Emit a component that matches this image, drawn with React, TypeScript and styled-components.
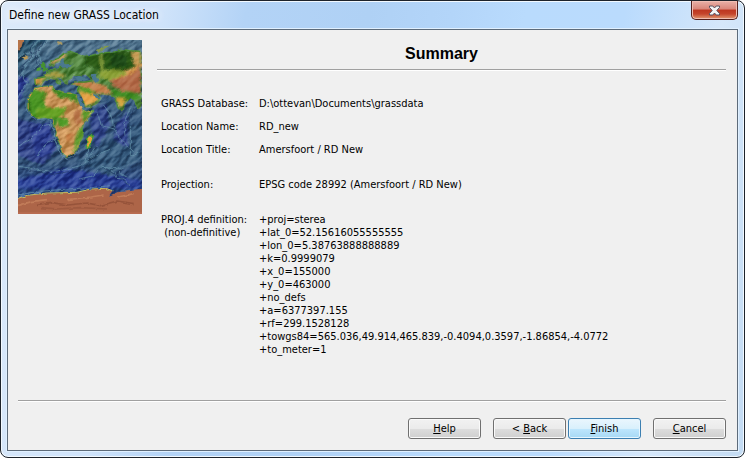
import React from "react";
import styled, { createGlobalStyle, css } from "styled-components";

const GlobalStyle = createGlobalStyle`
  *, *::before, *::after { box-sizing: border-box; }
  html, body { margin: 0; background: #fff; }
  body { font-family: "DejaVu Sans Condensed", "Noto Sans", sans-serif; font-size: 11px; line-height: 13px; color: #000; }
`;

const Frame = styled.div`
  display: flex;
  flex-direction: column;
  min-height: 100vh;
  padding: 0 6px 6px;
  border: 1px solid #1d232b;
  border-radius: 8px;
  background: linear-gradient(100deg, #dceafa 0%, #cfe3fa 20%, #b3d3f6 30%, #afd1f5 45%, #b3d5f9 55%, #b9dbfd 64%, #badbfd 76%, #d5e7fa 88%, #c3dbf3 100%);
  box-shadow: inset 0 0 0 1px #f2f9ff;
`;

const TitleBar = styled.header`
  display: flex;
  justify-content: space-between;
  align-items: flex-start;
  height: 28px;
`;

const WindowTitle = styled.h1`
  margin: 0;
  padding: 5px 8px 0 2px;
  font-size: 12px;
  font-weight: 400;
  line-height: 18px;
  text-shadow: 0 0 8px #fff, 0 0 8px #fff;
`;

const CloseButton = styled.button`
  display: grid;
  place-items: center;
  width: 47px;
  height: 19px;
  padding: 0;
  border: 1px solid #53201d;
  border-top: 0;
  border-radius: 0 0 5px 5px;
  background: linear-gradient(#e9b1a8 0%, #d98579 45%, #bd3620 50%, #c5452c 72%, #e29a72 100%);
  box-shadow: inset 0 0 0 1px #f0bdb2;
`;

const Page = styled.main`
  flex: 1;
  display: flex;
  flex-direction: column;
  padding: 10px 11px 11px 10px;
  border: 1px solid #5d6b7a;
  background: #f0f0f0;
  box-shadow: 0 0 0 1px #e0f0ff;
`;

const Body = styled.div`
  flex: 1;
  display: flex;
  align-items: flex-start;
  gap: 15px;
`;

const MapArt = styled.svg`
  flex: none;
  display: block;
  width: 124px;
  height: 174px;
  isolation: isolate;
`;

const Content = styled.section`
  flex: 1;
`;

const Heading = styled.h2`
  margin: 0;
  height: 29px;
  padding-top: 4px;
  font: bold 16px/20px "Liberation Sans", Arial, sans-serif;
  text-align: center;
`;

const Rule = styled.hr`
  height: 2px;
  margin: 0;
  border: 0;
  border-top: 1px solid #a0a0a0;
  background: #fff;
`;

const Details = styled.dl`
  display: grid;
  grid-template-columns: 98px 1fr;
  row-gap: 10px;
  margin: 0;
  padding: 26px 0 0 4px;
`;

const Term = styled.dt<{ $apart?: boolean }>`
  padding-top: ${(p) => (p.$apart ? 12 : 0)}px;
  white-space: pre;
`;

const Value = styled.dd<{ $apart?: boolean }>`
  margin: 0;
  padding-top: ${(p) => (p.$apart ? 12 : 0)}px;
  white-space: pre-line;
`;

const Actions = styled.footer`
  display: flex;
  justify-content: flex-end;
  gap: 12px;
  padding-top: 16px;
`;

const ButtonPair = styled.div`
  display: flex;
  gap: 2px;
`;

const Button = styled.button<{ $primary?: boolean }>`
  width: 73px;
  height: 21px;
  padding: 0;
  border: 1px solid #707070;
  border-radius: 3px;
  background: linear-gradient(#f2f2f2 0%, #ebebeb 50%, #dddddd 51%, #cfcfcf 100%);
  box-shadow: inset 0 0 0 1px #fafafa;
  font: inherit;
  color: inherit;
  ${(p) =>
    p.$primary &&
    css`
      border-color: #3c7fb1;
      background: linear-gradient(#eaf6fd 0%, #d9f0fc 50%, #bee6fd 51%, #a7d9f5 100%);
      box-shadow: inset 0 0 0 1px #e6f6ff;
    `}
`;

const facts = [
  { term: "GRASS Database:", value: "D:\\ottevan\\Documents\\grassdata" },
  { term: "Location Name:", value: "RD_new" },
  { term: "Location Title:", value: "Amersfoort / RD New" },
  { term: "Projection:", value: "EPSG code 28992 (Amersfoort / RD New)", apart: true },
  {
    term: "PROJ.4 definition:\n (non-definitive)",
    value: [
      "+proj=sterea",
      "+lat_0=52.15616055555555",
      "+lon_0=5.38763888888889",
      "+k=0.9999079",
      "+x_0=155000",
      "+y_0=463000",
      "+no_defs",
      "+a=6377397.155",
      "+rf=299.1528128",
      "+towgs84=565.036,49.914,465.839,-0.4094,0.3597,-1.86854,-4.0772",
      "+to_meter=1",
    ].join("\n"),
    apart: true,
  },
];

const AFRICA =
  "M51 147L76 142L106 140L111 150L126 154L141 160L171 162L176 168L191 197L204 217L228 214L216 234L201 252L194 267L198 290L186 310L181 330L166 345L148 353L136 345L128 315L116 290L118 275L108 255L106 240L96 234L61 237L44 227L31 207L31 182L38 167Z";
const EURASIA =
  "M372 36L340 34L310 30L290 38L262 40L240 44L215 50L190 46L176 42L160 36L140 42L122 56L98 66L96 76L108 82L116 72L128 66L132 78L124 86L106 90L90 96L80 106L84 112L52 118L54 136L72 138L84 124L100 118L112 122L126 136L130 128L120 116L132 118L144 134L152 136L152 124L164 118L170 106L184 110L206 106L218 116L224 124L200 128L168 128L162 136L186 138L180 152L194 176L204 204L220 204L246 188L252 174L236 160L252 166L282 168L292 174L304 210L314 216L320 196L338 174L352 184L362 210L372 200Z";

const WorldMap = () => (
  <MapArt viewBox="0 0 372 522" role="img" aria-label="Relief map of Europe, Africa and Asia">
    <defs>
      <linearGradient id="sea" x1="0" y1="0" x2="0" y2="1">
        <stop offset="0" stopColor="#52758e" />
        <stop offset="0.2" stopColor="#3e6484" />
        <stop offset="0.45" stopColor="#34567c" />
        <stop offset="0.7" stopColor="#34557a" />
        <stop offset="0.84" stopColor="#2f4c88" />
        <stop offset="1" stopColor="#3b6ea0" />
      </linearGradient>
      <filter id="coast" x="-5%" y="-5%" width="110%" height="110%">
        <feTurbulence type="fractalNoise" baseFrequency="0.08" numOctaves="2" seed="4" result="n" />
        <feDisplacementMap in="SourceGraphic" in2="n" scale="8" xChannelSelector="R" yChannelSelector="G" colorInterpolationFilters="sRGB" />
      </filter>
      <filter id="soft" x="-30%" y="-30%" width="160%" height="160%">
        <feGaussianBlur stdDeviation="3" result="b" />
        <feTurbulence type="fractalNoise" baseFrequency="0.06" numOctaves="3" seed="9" result="n" />
        <feDisplacementMap in="b" in2="n" scale="18" xChannelSelector="R" yChannelSelector="G" colorInterpolationFilters="sRGB" />
      </filter>
      <filter id="relief" x="0" y="0" width="100%" height="100%" colorInterpolationFilters="sRGB">
        <feTurbulence type="fractalNoise" baseFrequency="0.025 0.05" numOctaves="3" seed="21" />
        <feDiffuseLighting surfaceScale="10" lightingColor="#ffffff">
          <feDistantLight azimuth="260" elevation="31" />
        </feDiffuseLighting>
      </filter>
      <clipPath id="land">
        <path d={AFRICA} />
        <path d={EURASIA} />
      </clipPath>
    </defs>
    <rect width="372" height="522" fill="url(#sea)" />
    <g filter="url(#soft)">
      <path d="M0 120L36 112L24 150L0 210Z" fill="#2f3f94" />
      <path d="M0 240L100 260L120 330L80 380L0 350Z" fill="#31458a" />
      <path d="M40 270L96 250L112 340L60 360Z" fill="#2f3f92" />
      <path d="M180 370L310 290L372 250V360L280 410Z" fill="#365a7d" />
      <path d="M20 60L60 20L110 0H0V90Z" fill="#2c526d" />
      <path d="M214 230L270 190L280 260L240 330Z" fill="#31468b" />
      <path d="M300 250L334 220L336 330L290 300Z" fill="#31458d" />
      <path d="M0 425L140 390L372 425V450H0Z" fill="#2b4196" />
    </g>
    <g transform="rotate(-38 186 261)">
      <rect x="-160" y="-100" width="700" height="720" filter="url(#relief)" opacity="0.6" style={{ mixBlendMode: "soft-light" }} />
    </g>
    <g fill="none" stroke="#6f9fb3" strokeWidth="3" opacity="0.6" filter="url(#coast)">
      <path d="M66 4L44 26L48 56L26 74L14 106L28 132L10 160L2 180" />
      <path d="M94 0L62 38L70 72L48 90M0 58L22 42L60 50" />
      <path d="M6 382L56 390L110 398L150 390L190 380L226 352L282 330" />
      <path d="M2 320L40 300L74 260L100 256M60 348L90 310L114 300" />
      <path d="M240 220L254 260L292 270L310 300L350 338M258 196L282 228L290 264" />
      <path d="M342 202L320 252L324 290M340 258V350L364 340" />
      <path d="M212 330L204 366M238 318L218 350M186 420L230 410L252 382L320 388" />
      <path d="M272 386L290 398L298 418L320 420L338 438M296 384L312 404L330 412" />
      <path d="M0 468L60 458L150 450L220 446L280 440" />
      <path d="M27 184L27 210L42 232L60 241L94 239L103 256L112 278L114 300L124 330L134 350L150 358L170 350L186 334" />
    </g>
    <g fill="none" stroke="#162e56" strokeWidth="3" opacity="0.5" filter="url(#coast)">
      <path d="M56 0L38 30L44 54L18 78L6 114M84 4L54 44L60 74" />
      <path d="M8 390L106 406L154 398L194 388L230 360M262 388L300 410L334 434M352 204L334 250L330 280" />
    </g>
    <g filter="url(#coast)">
      <path d={AFRICA} fill="#e09a4c" stroke="#529346" strokeWidth="3" />
      <path d={EURASIA} fill="#408329" stroke="#5b963d" strokeWidth="2" />
      <path d="M210 296L224 284L226 294L216 326L208 324Z" fill="#e4a03c" stroke="#46a22c" strokeWidth="4" />
      <path d="M74 84L70 74L76 66L84 80L94 92L78 98Z" fill="#459032" />
      <path d="M60 88L69 84L68 94L58 96Z" fill="#4f9b35" />
      <path d="M10 54L24 49L36 54L22 60Z" fill="#bd9b55" />
      <path d="M0 0H20L14 22L6 32L0 38Z" fill="#b67448" />
      <path d="M236 34L254 24L282 18L264 28L244 38Z" fill="#839b48" />
      <path d="M122 6L136 12L132 18L120 12Z" fill="#a79865" />
    </g>
    <g clipPath="url(#land)">
      <g filter="url(#soft)">
        <path d="M28 160L50 150L90 162L80 186L92 214L106 240H28Z" fill="#4a9420" />
        <path d="M104 138L120 150L176 160L190 196L160 180L130 176L110 160Z" fill="#3e8a20" />
        <path d="M60 210L150 206L140 226L120 240L60 236Z" fill="#63a024" />
        <path d="M118 236L154 240L156 262L130 266Z" fill="#4d9a28" />
        <path d="M106 234L122 240L118 262L106 260Z" fill="#3a8c28" />
        <path d="M190 268L204 262L196 300L180 330L168 346L178 300Z" fill="#5a9a2c" />
        <path d="M200 214L232 210L204 250L196 236Z" fill="#5c9a2a" />
        <path d="M28 184L44 190L42 226L28 214Z" fill="#2c6a18" />
        <path d="M176 212L196 218L190 250L180 262L172 236Z" fill="#b8744a" />
        <path d="M148 290L170 280L166 300L150 312Z" fill="#c98248" />
        <path d="M206 40H372V104L300 98L240 92L206 78Z" fill="#2a5a18" />
        <path d="M286 46L330 50L330 84L280 82Z" fill="#1e4714" />
        <path d="M250 46L258 46L262 98L252 98Z" fill="#86a03c" />
        <path d="M98 66L142 44L154 50L126 64L108 76Z" fill="#cb995a" />
        <path d="M54 120L84 106L120 100L148 108L140 116L90 116L56 140Z" fill="#a3983f" />
        <path d="M50 118L76 118L74 138L52 138Z" fill="#cc9a4c" />
        <path d="M168 128H226L270 142L286 166H244L206 146L166 136Z" fill="#c4824d" />
        <path d="M184 146L232 164L246 184L220 196L206 206Z" fill="#e7a448" />
        <path d="M178 140L214 146L236 160L222 170L190 156Z" fill="#5a9828" />
        <path d="M346 38H372V86L350 76Z" fill="#c69b54" />
        <path d="M276 122L320 106L372 80V166L320 158L290 142Z" fill="#b46c48" />
        <path d="M280 114L330 96L372 76L360 96L300 124Z" fill="#d49a50" />
        <path d="M246 98L310 92L330 106L282 126L248 118Z" fill="#8aa034" />
        <path d="M284 152L350 162L372 176L340 190L308 182L290 172Z" fill="#3c8a24" />
        <path d="M298 178L328 180L314 208L304 204Z" fill="#d5a43e" />
      </g>
      <g transform="rotate(-38 186 261)">
        <rect x="-160" y="-100" width="700" height="720" filter="url(#relief)" opacity="0.25" style={{ mixBlendMode: "soft-light" }} />
      </g>
    </g>
    <g fill="#4a788f" filter="url(#coast)">
      <path d="M220 106L234 104L244 124L236 132L226 120Z" />
      <path d="M130 62L138 58L144 76L168 74L160 84L136 86L126 76Z" />
      <path d="M172 116L186 110L204 116L216 124L180 124Z" />
      <path d="M176 164L184 168L204 210L198 214L188 196Z" />
      <path d="M228 160L238 166L250 176L244 178L230 168Z" />
    </g>
    <path d="M-10 480L30 470L90 463L180 461L220 451L270 448L286 456L276 470L310 456L382 449V530H-10Z" fill="#ad6548" filter="url(#coast)" />
    <g fill="none" strokeWidth="5" filter="url(#coast)">
      <path d="M60 496L100 490L150 498L210 492L250 500L300 486L350 494" stroke="#8c4c35" opacity="0.7" />
      <path d="M0 500L40 488L90 482M150 482L220 474L260 468M300 474L350 464" stroke="#c98460" opacity="0.7" />
      <path d="M72 506L120 510L190 506L270 510" stroke="#93523a" opacity="0.6" />
    </g>
    <path d="M0 479L30 469L90 462L180 460L220 450L266 448L286 455" fill="none" stroke="#c3b75b" strokeWidth="3" filter="url(#coast)" />
    <path d="M0 517H372V522H0Z" fill="#b96c51" />
  </MapArt>
);

const CloseGlyph = () => (
  <svg width="13" height="11" viewBox="0 0 13 11" aria-hidden="true">
    <path d="M1.5 1H4.8L6.5 3L8.2 1H11.5V2.5L8.8 5.5L11.5 8.5V10H8.2L6.5 8L4.8 10H1.5V8.5L4.2 5.5L1.5 2.5Z" fill="#f4f4f4" stroke="#56505f" />
  </svg>
);

export default function App() {
  return (
    <>
      <GlobalStyle />
      <Frame>
        <TitleBar>
          <WindowTitle>Define new GRASS Location</WindowTitle>
          <CloseButton type="button" aria-label="Close">
            <CloseGlyph />
          </CloseButton>
        </TitleBar>
        <Page>
          <Body>
            <WorldMap />
            <Content>
              <Heading>Summary</Heading>
              <Rule />
              <Details>
                {facts.map((f) => (
                  <React.Fragment key={f.term}>
                    <Term $apart={f.apart}>{f.term}</Term>
                    <Value $apart={f.apart}>{f.value}</Value>
                  </React.Fragment>
                ))}
              </Details>
            </Content>
          </Body>
          <Rule />
          <Actions>
            <Button type="button"><u>H</u>elp</Button>
            <ButtonPair>
              <Button type="button">&lt; <u>B</u>ack</Button>
              <Button type="button" $primary><u>F</u>inish</Button>
            </ButtonPair>
            <Button type="button"><u>C</u>ancel</Button>
          </Actions>
        </Page>
      </Frame>
    </>
  );
}
